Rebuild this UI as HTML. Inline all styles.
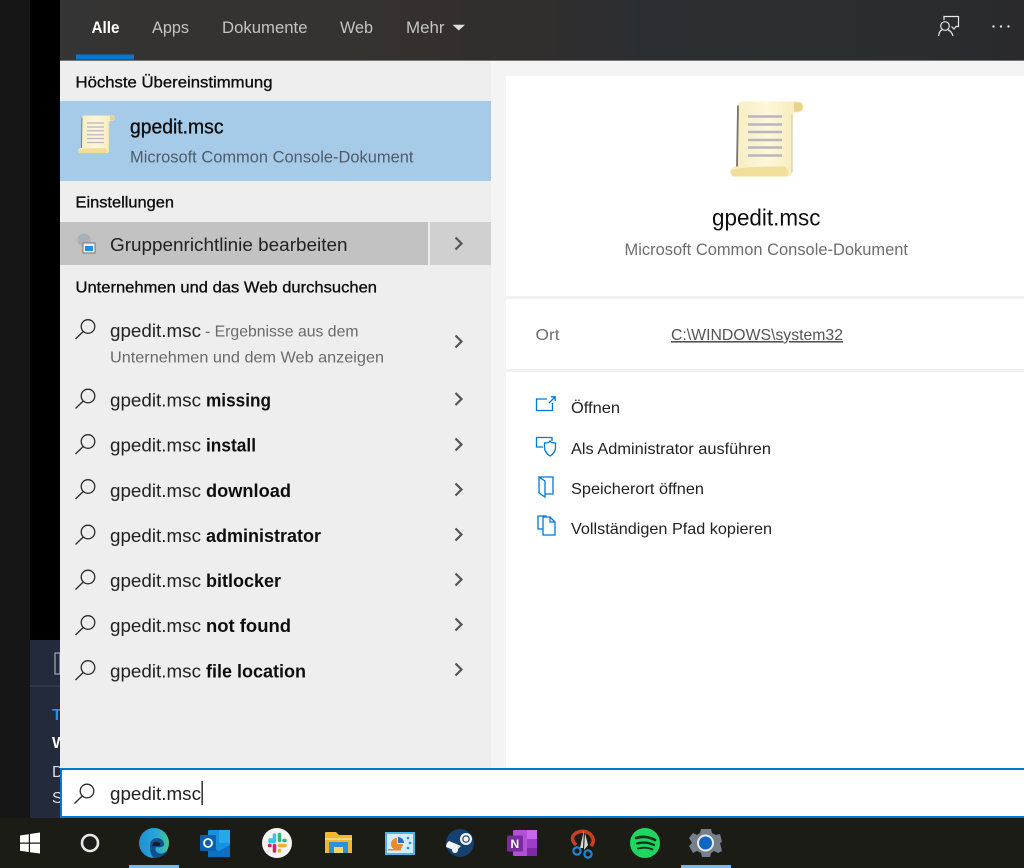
<!DOCTYPE html>
<html lang="de"><head><meta charset="utf-8"><title>gpedit.msc</title>
<style>
html,body{margin:0;padding:0;background:#000;width:1024px;height:868px;overflow:hidden}
svg{display:block}
text{font-family:"Liberation Sans",sans-serif}
.s{stroke:currentColor;stroke-width:.3px}
.b{font-weight:bold}
</style></head><body>
<svg width="1024" height="868" viewBox="0 0 1024 868" xmlns="http://www.w3.org/2000/svg">
<defs>
<linearGradient id="hd" x1="0" x2="1" y1="0" y2="0"><stop offset="0" stop-color="#343434"/><stop offset=".4" stop-color="#342f2e"/><stop offset=".6" stop-color="#2c2e30"/><stop offset="1" stop-color="#2b2c2e"/></linearGradient>
<linearGradient id="pap" x1="0" x2="1" y1="0" y2="0"><stop offset="0" stop-color="#f6ecc0"/><stop offset=".5" stop-color="#fdf7d8"/><stop offset="1" stop-color="#f5e9b4"/></linearGradient>
<linearGradient id="ed" x1="0" x2="1" y1="0" y2="0"><stop offset="0" stop-color="#1f8fd6"/><stop offset=".6" stop-color="#2aa6d8"/><stop offset="1" stop-color="#45c88a"/></linearGradient>
<filter id="bl" x="-2%" y="-2%" width="104%" height="104%"><feGaussianBlur stdDeviation=".35"/></filter>
<g id="sr" fill="none" stroke="#2a2a2a" stroke-width="1.300"><circle cx="88" cy="326.500" r="6.800"/><path d="M83.200 331.500 75.500 339"/></g>
<path id="ch" d="M455.500 -6 461.500 0 455.500 6" fill="none" stroke="#555" stroke-width="2.200"/>
<g id="scroll">
<path d="M8 6 Q8 1 13 1 L70 1 Q74 3 73 8 Q72 12 66 12 L63 12 L62 70 Q62 76 58 76 L3 76 Q-1 72 1 68 Q3 66 7 66 Z" fill="url(#pap)"/>
<path d="M8 5 L7 66" fill="none" stroke="#77756a" stroke-width="1.800"/>
<path d="M62 14V72" fill="none" stroke="#cfc6a0" stroke-width="1"/>
<path d="M1 70 Q4 66 55 66 L58 70 Q59 76 56 76 L4 76 Q0 75 1 70Z" fill="#f0df9a"/>
<path d="M64 2 Q72 1 73 6 Q72 12 64 11 Z" fill="#e8d486"/>
<g stroke="#b9b6c0" stroke-width="2.400"><path d="M18 16H52M18 24H52M18 31.500H52M18 39.500H52M18 47H52M18 55H52"/></g>
</g>
</defs>
<g filter="url(#bl)">
<rect width="1024" height="868" fill="#000"/>
<rect x="0" y="0" width="30" height="818" fill="#141414"/>
<rect x="30" y="640" width="30" height="178" fill="#20293a"/>
<rect x="30" y="685.500" width="30" height="1" fill="#3c4454"/>
<rect x="55" y="653" width="5" height="21" fill="none" stroke="#aab" stroke-width="1.200"/>
<text x="52" y="720" font-size="16" fill="#2f8fe0" class="b">T</text>
<text x="52" y="748" font-size="16" fill="#fff" class="b">W</text>
<text x="52" y="777" font-size="16" fill="#dde">D</text>
<text x="52" y="803" font-size="16" fill="#dde">S</text>

<rect x="60" y="0" width="964" height="60" fill="url(#hd)"/>
<rect x="60" y="60" width="964" height="1" fill="#777"/>
<rect x="76" y="54.500" width="58" height="5" fill="#0078d4"/>
<text x="91.500" y="33" font-size="17" fill="#fff" class="b" textLength="28" lengthAdjust="spacingAndGlyphs">Alle</text>
<text x="152" y="33" font-size="17" fill="#c4c4c4" textLength="37" lengthAdjust="spacingAndGlyphs">Apps</text>
<text x="222" y="33" font-size="17" fill="#c4c4c4" textLength="85.500" lengthAdjust="spacingAndGlyphs">Dokumente</text>
<text x="340" y="33" font-size="17" fill="#c4c4c4" textLength="33" lengthAdjust="spacingAndGlyphs">Web</text>
<text x="406" y="33" font-size="17" fill="#c4c4c4" textLength="38.500" lengthAdjust="spacingAndGlyphs">Mehr</text>
<path d="M452.500 24.800H465L458.800 30.500Z" fill="#ddd"/>
<g fill="none" stroke="#e8e8e8" stroke-width="1.200">
<circle cx="945" cy="26" r="4.300"/><path d="M938.500 36Q939.500 30.500 942 30M948 30Q951.500 31 953 36"/>
<path d="M944 20V16.500H958.500V26.500H956L954 29L951.500 26.500"/>
</g>
<g fill="#ddd"><circle cx="993.500" cy="26.500" r="1.200"/><circle cx="1001" cy="26.500" r="1.200"/><circle cx="1008.500" cy="26.500" r="1.200"/></g>

<rect x="60" y="61" width="431" height="707" fill="#eeeeee"/>
<rect x="491" y="61" width="533" height="707" fill="#f4f4f4"/>
<rect x="506" y="76" width="518" height="692" fill="#fff"/>
<rect x="506" y="296" width="518" height="3" fill="#f1f1f1"/>
<rect x="506" y="369" width="518" height="3" fill="#f1f1f1"/>

<text x="75.500" y="87.500" font-size="16" fill="#111" class="s" textLength="197" lengthAdjust="spacingAndGlyphs">Höchste Übereinstimmung</text>
<rect x="60" y="101" width="431" height="80" fill="#a6cbe8"/>
<use href="#scroll" transform="translate(78 115) scale(.5)"/>
<text x="130" y="133.500" font-size="20" fill="#111" class="s" textLength="93.500" lengthAdjust="spacingAndGlyphs">gpedit.msc</text>
<text x="130" y="162.500" font-size="16.500" fill="#4f5c6a" textLength="283.500" lengthAdjust="spacingAndGlyphs">Microsoft Common Console-Dokument</text>
<text x="75.500" y="207.500" font-size="16" fill="#111" class="s" textLength="98.500" lengthAdjust="spacingAndGlyphs">Einstellungen</text>
<rect x="60" y="222" width="368" height="43" fill="#c2c2c2"/>
<rect x="428" y="222" width="2" height="43" fill="#eee"/>
<rect x="430" y="222" width="61" height="43" fill="#d0d0d0"/>
<circle cx="84" cy="240" r="6.500" fill="#a8b0ba"/>
<rect x="83" y="243" width="12" height="10" fill="#f2f2f2" stroke="#777"/>
<rect x="85" y="246" width="8" height="5" fill="#2a8ae0"/>
<text x="110" y="251" font-size="18" fill="#222" textLength="237.500" lengthAdjust="spacingAndGlyphs">Gruppenrichtlinie bearbeiten</text>
<use href="#ch" transform="translate(0 243.500)"/>
<text x="75.500" y="292.500" font-size="16" fill="#111" class="s" textLength="301.500" lengthAdjust="spacingAndGlyphs">Unternehmen und das Web durchsuchen</text>

<use href="#sr"/>
<text x="110" y="337" font-size="18" fill="#222" textLength="91" lengthAdjust="spacingAndGlyphs">gpedit.msc</text>
<text x="205" y="336.500" font-size="16" fill="#6a6a6a" textLength="153.500" lengthAdjust="spacingAndGlyphs">- Ergebnisse aus dem</text>
<text x="110" y="362.500" font-size="16" fill="#6a6a6a" textLength="274" lengthAdjust="spacingAndGlyphs">Unternehmen und dem Web anzeigen</text>
<use href="#ch" transform="translate(0 341.500)"/>

<use href="#sr" y="69.500"/><text x="110" y="406.500" font-size="18" fill="#222" textLength="91" lengthAdjust="spacingAndGlyphs">gpedit.msc</text><text x="206" y="406.500" font-size="18" fill="#111" class="b" textLength="65" lengthAdjust="spacingAndGlyphs">missing</text><use href="#ch" transform="translate(0 399)"/>
<use href="#sr" y="115"/><text x="110" y="451.500" font-size="18" fill="#222" textLength="91" lengthAdjust="spacingAndGlyphs">gpedit.msc</text><text x="206" y="451.500" font-size="18" fill="#111" class="b" textLength="50" lengthAdjust="spacingAndGlyphs">install</text><use href="#ch" transform="translate(0 444.500)"/>
<use href="#sr" y="160"/><text x="110" y="497" font-size="18" fill="#222" textLength="91" lengthAdjust="spacingAndGlyphs">gpedit.msc</text><text x="206" y="497" font-size="18" fill="#111" class="b" textLength="85" lengthAdjust="spacingAndGlyphs">download</text><use href="#ch" transform="translate(0 489.500)"/>
<use href="#sr" y="205.500"/><text x="110" y="542" font-size="18" fill="#222" textLength="91" lengthAdjust="spacingAndGlyphs">gpedit.msc</text><text x="206" y="542" font-size="18" fill="#111" class="b" textLength="115" lengthAdjust="spacingAndGlyphs">administrator</text><use href="#ch" transform="translate(0 534.500)"/>
<use href="#sr" y="250.500"/><text x="110" y="587" font-size="18" fill="#222" textLength="91" lengthAdjust="spacingAndGlyphs">gpedit.msc</text><text x="206" y="587" font-size="18" fill="#111" class="b" textLength="75" lengthAdjust="spacingAndGlyphs">bitlocker</text><use href="#ch" transform="translate(0 579.500)"/>
<use href="#sr" y="296"/><text x="110" y="632" font-size="18" fill="#222" textLength="91" lengthAdjust="spacingAndGlyphs">gpedit.msc</text><text x="206" y="632" font-size="18" fill="#111" class="b" textLength="85" lengthAdjust="spacingAndGlyphs">not found</text><use href="#ch" transform="translate(0 624.500)"/>
<use href="#sr" y="341"/><text x="110" y="677.500" font-size="18" fill="#222" textLength="91" lengthAdjust="spacingAndGlyphs">gpedit.msc</text><text x="206" y="677.500" font-size="18" fill="#111" class="b" textLength="100" lengthAdjust="spacingAndGlyphs">file location</text><use href="#ch" transform="translate(0 669.500)"/>

<use href="#scroll" transform="translate(730 100.500)"/>
<text x="712" y="225.500" font-size="23" fill="#111" textLength="108.500" lengthAdjust="spacingAndGlyphs">gpedit.msc</text>
<text x="624.500" y="255" font-size="16.500" fill="#6e6e6e" textLength="283.500" lengthAdjust="spacingAndGlyphs">Microsoft Common Console-Dokument</text>
<text x="535.500" y="340" font-size="16" fill="#6e6e6e" textLength="24" lengthAdjust="spacingAndGlyphs">Ort</text>
<text x="671" y="340" font-size="16" fill="#555" text-decoration="underline" textLength="172" lengthAdjust="spacingAndGlyphs">C:\WINDOWS\system32</text>

<g fill="none" stroke="#0078d4" stroke-width="1.300">
<path d="M547 399H536.500V410.500H552.500V403M549 403L555 397M551 396.800H555.200V401"/>
<path d="M552 441V437.500H536.500V447H543"/>
<path d="M544.500 443Q549 443 550 441Q551 443 555.500 443V448Q555 453 550 456Q545 453 544.500 448Z"/>
<path d="M539 477H553V494H545M539 477L545 481V497L539 493Z"/>
<path d="M543 517H550L555 522V535H543ZM550 517V522H555M543 529H538V516H546V517"/>
</g>
<text x="571" y="413" font-size="16" fill="#222" textLength="49" lengthAdjust="spacingAndGlyphs">Öffnen</text>
<text x="571" y="454" font-size="16" fill="#222" textLength="200" lengthAdjust="spacingAndGlyphs">Als Administrator ausführen</text>
<text x="571" y="494" font-size="16" fill="#222" textLength="133" lengthAdjust="spacingAndGlyphs">Speicherort öffnen</text>
<text x="571" y="534" font-size="16" fill="#222" textLength="201" lengthAdjust="spacingAndGlyphs">Vollständigen Pfad kopieren</text>

<rect x="61" y="769" width="964" height="48" fill="#fff" stroke="#0078d4" stroke-width="2"/>
<use href="#sr" y="464.500" x="-1"/>
<text x="110" y="800" font-size="18" fill="#222" textLength="91" lengthAdjust="spacingAndGlyphs">gpedit.msc</text>
<rect x="201.500" y="781" width="1.300" height="24" fill="#111"/>

<rect x="0" y="818" width="1024" height="50" fill="#1e1a18"/>
<path d="M20 835.500 28.800 834.200V842.500H20ZM30 834 40 832.500V842.500H30ZM20 843.700H28.800V852L20 850.700ZM30 843.700H40V853.500L30 852.200Z" fill="#fff"/>
<circle cx="90" cy="843" r="8" fill="none" stroke="#e8e8e8" stroke-width="2.600"/>
<rect x="129" y="865" width="50" height="3" fill="#76b9ed"/>
<rect x="681" y="865" width="50" height="3" fill="#76b9ed"/>

<circle cx="154" cy="843" r="15" fill="url(#ed)"/>
<path d="M150 846Q150 838 158 838Q164 839 164 845Q162 848 156 847Q154 850 158 853Q163 855 168 850Q163 858 154 858Q150 855 150 846Z" fill="#0d4f8f"/>
<path d="M152 846Q153 841 158 842Q161 843 160 846Z" fill="#1e1a18"/>

<rect x="208" y="830" width="22" height="27" rx="1" fill="#1490df"/>
<rect x="219" y="830" width="11" height="13" fill="#28a8ea"/>
<path d="M208 845 219 851 230 845V857H208Z" fill="#0a6fc0"/>
<rect x="200" y="835" width="16" height="16" rx="1" fill="#0f5fb0"/>
<circle cx="208" cy="843" r="4" fill="none" stroke="#fff" stroke-width="1.800"/>

<circle cx="277" cy="843" r="15" fill="#f4f4f4"/>
<g stroke-width="3.500" stroke-linecap="round"><path d="M274.500 835V840H270" stroke="#36c5f0" fill="none"/><path d="M270 841.500H274" stroke="#36c5f0"/><path d="M279.500 834.500V840.500" stroke="#2eb67d"/><path d="M284 840.500H285" stroke="#2eb67d"/><path d="M279.500 845.500H285" stroke="#ecb22e"/><path d="M279.500 850.500V851" stroke="#ecb22e"/><path d="M274.500 845.500V851" stroke="#e01e5a"/><path d="M269.500 845.500H270" stroke="#e01e5a"/></g>

<path d="M325 833Q325 832 326 832H336L339 835H352V853H325Z" fill="#f2b632"/>
<rect x="325" y="838" width="27" height="2" fill="#f8d777"/>
<rect x="329" y="842" width="19" height="11" fill="#2f8fdb"/>
<rect x="334" y="847" width="9" height="6" fill="#f8d568"/>

<rect x="385" y="832" width="30" height="23" fill="#4fb4ea"/>
<rect x="387" y="834" width="26" height="19" fill="#d3ecfb"/>
<path d="M397 838a6 6 0 1 0 6 6h-6z" fill="#e58a2d"/><path d="M398 837a6 6 0 0 1 6 6h-6z" fill="#2a6fb8"/>
<rect x="388" y="849" width="13" height="1.500" fill="#e58a2d"/>
<g fill="#2a8ed6"><circle cx="408" cy="838" r="1.300"/><circle cx="410" cy="843" r="1.300"/><circle cx="408" cy="848" r="1.300"/></g>

<circle cx="460" cy="843" r="14" fill="#15406e"/>
<path d="M446 847 456 851 461 846 449 841Q446 843 446 847Z" fill="#f2f4f6"/>
<circle cx="466" cy="839" r="6" fill="#f2f4f6"/><circle cx="466" cy="839" r="3.800" fill="#15406e"/><circle cx="466" cy="839" r="2.600" fill="#f2f4f6"/>
<circle cx="455" cy="850" r="3" fill="#f2f4f6"/>

<rect x="513" y="830" width="24" height="26" rx="1" fill="#b34fd8"/>
<rect x="527" y="830" width="10" height="9" fill="#c668e8"/><rect x="527" y="839" width="10" height="9" fill="#a03cc8"/><rect x="527" y="848" width="10" height="8" fill="#7b2aa5"/>
<rect x="507" y="835.500" width="16" height="16" rx="1" fill="#7a2b9f"/>
<text x="510.500" y="848" font-size="12" fill="#fff" class="b">N</text>

<path d="M576 845Q569 838 576 833Q584 829 590 834Q596 840 591 846" fill="none" stroke="#c8411c" stroke-width="3.500"/>
<path d="M584 830 583 848 580 848ZM585 833 588 845 584 850Z" fill="#d8d8d8"/>
<circle cx="577" cy="851" r="3.600" fill="none" stroke="#2283d6" stroke-width="2.200"/>
<circle cx="588" cy="854" r="3.600" fill="none" stroke="#2283d6" stroke-width="2.200"/>

<circle cx="645" cy="843" r="15" fill="#1ed760"/>
<g fill="none" stroke="#12331f" stroke-linecap="round"><path d="M636 838Q646 835 655 840" stroke-width="2.700"/><path d="M637 843.500Q646 841 654 845" stroke-width="2.300"/><path d="M638 848.500Q646 846.500 652.500 849.500" stroke-width="1.900"/></g>

<path d="M701 829H711L712 833 716 835 720 834 722 842 720 843 722 851 718 853 714 851 711 853 710 857H702L701 853 697 851 693 853 689 846 692 843 689 838 693 833 697 835 700 833Z" fill="#75808c"/>
<circle cx="705.500" cy="843" r="8.500" fill="#e8e8e8"/>
<circle cx="705.500" cy="843" r="6.500" fill="#0a66c2"/>
</g>
</svg>
</body></html>
